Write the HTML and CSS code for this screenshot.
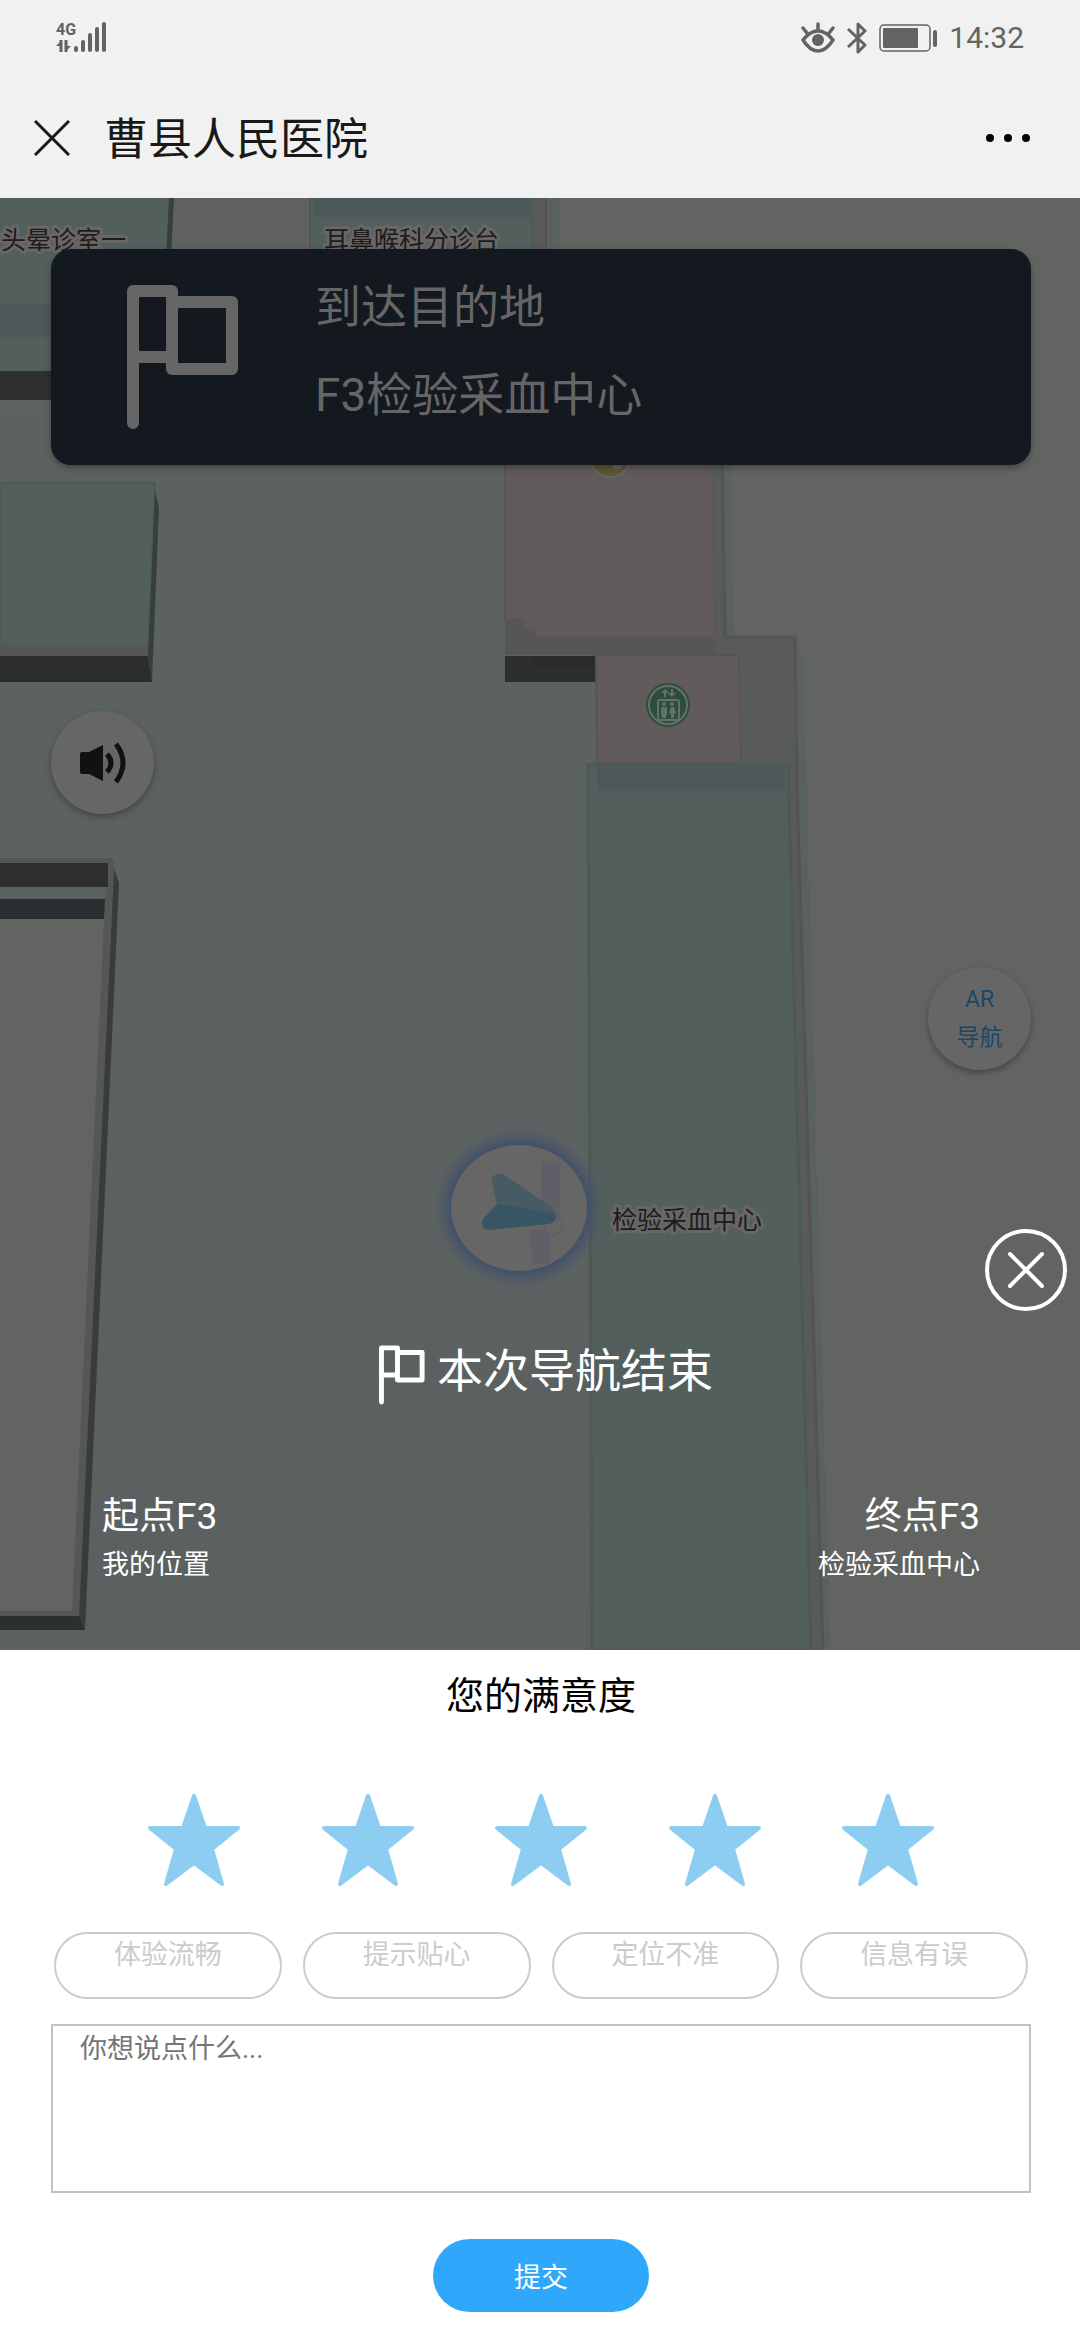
FILE: index.html
```html
<!DOCTYPE html>
<html lang="zh-CN">
<head>
  <meta charset="UTF-8"/>
  <meta name="viewport" content="width=device-width, initial-scale=1.0"/>
  <title>曹县人民医院</title>
  <link rel="stylesheet" href="styles.css">
</head>
<body>
  <header>
    <div class="status-bar">
      <svg class="signal" viewBox="0 0 52 36" width="52" height="36" aria-hidden="true">
        <text class="network" x="0" y="15">4G</text>
        <path d="M5 20v12M10 20v12" fill="none" stroke="#636363" stroke-width="3"/>
        <path d="M6 20v6H0zM9 32v-6h6z" fill="#636363"/>
        <path d="M20 28v2M27 22v8M34 15v15M41 9v21M48 4v26" fill="none" stroke="#636363" stroke-width="4" stroke-linecap="round"/>
      </svg>
      <div class="status-right">
        <svg viewBox="0 0 34 34" width="34" height="34" aria-hidden="true">
          <path d="M2 19Q9 10 17 10t15 9Q25 30 17 30T2 19zM17 9V3M6 12L2 7M28 12l4-5" fill="none" stroke="#636363" stroke-width="3.5" stroke-linecap="round" stroke-linejoin="round"/>
          <circle cx="17" cy="19" r="6" fill="#636363"/>
        </svg>
        <svg viewBox="0 0 20 34" width="20" height="34" aria-hidden="true">
          <path d="M1 8l17 16-7 7V3l7 7L1 26" fill="none" stroke="#636363" stroke-width="3" stroke-linejoin="round"/>
        </svg>
        <svg class="battery" viewBox="0 0 58 28" width="58" height="28" aria-hidden="true">
          <rect x="1" y="1" width="50" height="26" rx="4" fill="none" stroke="#636363" stroke-width="1.5"/>
          <rect x="4" y="4" width="35" height="20" rx="1" fill="#636363"/>
          <rect x="54" y="6" width="4" height="17" rx="2" fill="#636363"/>
        </svg>
        <span class="clock">14:32</span>
      </div>
    </div>
    <div class="title-bar">
      <button class="icon-btn" type="button" aria-label="关闭">
        <svg viewBox="0 0 36 36" width="36" height="36"><path d="M1 1l34 34M35 1L1 35" stroke="#191919" stroke-width="3"/></svg>
      </button>
      <h1>曹县人民医院</h1>
      <button class="icon-btn" type="button" aria-label="更多">
        <svg viewBox="0 0 44 8" width="44" height="8"><circle cx="4" cy="4" r="4"/><circle cx="22" cy="4" r="4"/><circle cx="40" cy="4" r="4"/></svg>
      </button>
    </div>
  </header>

  <main class="stage">
    <!-- Indoor floor map -->
    <svg class="map" viewBox="0 198 1080 1452" preserveAspectRatio="xMidYMin slice" aria-hidden="true">
      <defs>
        <linearGradient id="floor" x1="0" y1="0" x2="0" y2="1">
          <stop offset="0" stop-color="#606160"/>
          <stop offset="0.25" stop-color="#5b6261"/>
          <stop offset="1" stop-color="#5b6161"/>
        </linearGradient>
        <radialGradient id="glow">
          <stop offset="0.8" stop-color="#41506a"/>
          <stop offset="0.88" stop-color="#41506a" stop-opacity="0.5"/>
          <stop offset="1" stop-color="#41506a" stop-opacity="0"/>
        </radialGradient>
      </defs>
      <rect y="198" width="1080" height="1452" fill="url(#floor)"/>
      <!-- outside -->
      <path d="M559 198H1080V1650H830L803 660 795 637H734L731 465 559 440z" fill="#626462"/>
      <path d="M547 198h12v60h-12zM722 465h9l3 172h-9zM795 650l8 10 27 990h-7z" fill="#5a6261"/>

      <!-- upper left rooms -->
      <path d="M0 198h169l-6 173H0z" fill="#525f5c"/>
      <path d="M0 304h165v33H0z" fill="#4d5958"/>
      <path d="M169 198h5l-3 60h-5z" fill="#38403f"/>
      <path d="M0 371h163v29H0z" fill="#2d302f"/>
      <path d="M0 483h155l-7 163H0z" fill="#525f5c" stroke="#4d5a58" stroke-width="2"/>
      <path d="M0 646h149v10H0z" fill="#555756"/>
      <path d="M0 656h148l4 26H0z" fill="#2b2d2c"/>
      <path d="M155 490l4 18-7 174-4-26z" fill="#383e3d"/>

      <!-- lower left room -->
      <path d="M0 858h111l3 2-35 756H0z" fill="#555756"/>
      <path d="M114 868l5 15-34 747-6-14z" fill="#3a3c3b"/>
      <path d="M0 863h108v24H0z" fill="#2e302f"/>
      <path d="M0 887h107l-2 12H0z" fill="#5a6261"/>
      <path d="M0 899h105l-1 20H0z" fill="#2a2e30"/>
      <path d="M0 919h104L72 1611H0z" fill="#626462"/>
      <path d="M0 1616h79l6 14H0z" fill="#2d2f2e"/>

      <!-- top middle room -->
      <path d="M310 198h222v60H310z" fill="#525f5c" stroke="#4d5a58" stroke-width="2"/>
      <path d="M314 198h217v19H314z" fill="#4d5958"/>
      <path d="M533 198h14v60h-14z" fill="#585a59"/>
      <path d="M546 198v60" stroke="#555251" stroke-width="2"/>

      <!-- stair hall and lift -->
      <path d="M505 450h217l3 187h70l2 150 26 863h-14L788 764H596V655h-91z" fill="#595b5a"/>
      <path d="M722 450l3 187h70l2 150 26 863" fill="none" stroke="#535453" stroke-width="3"/>
      <path d="M505 450h207l3 187H534v-8h-10v-10h-19z" fill="#605b5a" stroke="#595656" stroke-width="2"/>
      <path d="M505 619h19v10h10v8h181v18H505z" fill="#555756"/>
      <path d="M505 656h91v26h-91z" fill="#2d2f2e"/>
      <path d="M534 656h62v10h-62z" fill="#2a2c2b"/>
      <path d="M596 655h143l2 109H597z" fill="#605b5a" stroke="#575454" stroke-width="2"/>
      <circle cx="610" cy="457" r="20" fill="#5e5534" stroke="#646763" stroke-width="2"/>
      <path d="M606 465h7v4h8v-8h-15z" fill="#666"/>
      <g transform="translate(668 705)">
        <circle r="21" fill="#2c4e3c" stroke="#2c4e3c" stroke-width="2"/>
        <circle r="19" fill="none" stroke="#65706a" stroke-width="2"/>
        <rect x="-10" y="-5" width="21" height="20" rx="2" fill="none" stroke="#65706a" stroke-width="2"/>
        <path d="M-3-8v-6M4-16v6" stroke="#65706a" stroke-width="2"/>
        <path d="M-7-12l4-4 4 4zM0-12l4 4 4-4z" fill="#65706a"/>
        <circle cx="-4" cy="-1" r="2" fill="#65706a"/>
        <circle cx="4" cy="-1" r="2" fill="#65706a"/>
        <path d="M-7 2h6v6l-1 5h-4l-1-5zM3 2h3l2 6-2 1v4H3V9L1 8z" fill="#65706a"/>
      </g>

      <!-- blood test centre -->
      <path d="M588 765h200l23 885H592z" fill="#525f5c" stroke="#4b5957" stroke-width="3"/>
      <path d="M597 767h188v24H597z" fill="#4d5958"/>

      <!-- current position -->
      <ellipse cx="519" cy="1208" rx="84" ry="79" fill="url(#glow)"/>
      <ellipse cx="519" cy="1208" rx="68" ry="63" fill="#666"/>
      <path d="M541 1161h19v64h-19zM530 1230h20v34h-18z" fill="#605f68"/>
      <circle cx="553" cy="1226" r="9" fill="#666" stroke="#605f68" stroke-width="2"/>
      <path d="M497 1204L492 1183Q491 1175 498 1174 502 1173 506 1176L551 1207Q558 1213 555 1219z" fill="#465b64"/>
      <path d="M497 1204L483 1219Q479 1230 490 1230L549 1224Q557 1222 556 1214z" fill="#385563"/>

      <g class="map-label">
        <text x="1" y="249">头晕诊室一</text>
        <text x="324" y="249">耳鼻喉科分诊台</text>
        <text x="612" y="1229">检验采血中心</text>
      </g>
    </svg>

    <section class="nav-card">
      <svg viewBox="0 0 112 144" width="112" height="144" aria-hidden="true">
        <path d="M6 138V6h39v78h60V17H45M6 72h39" fill="none" stroke="#666" stroke-width="12" stroke-linecap="round" stroke-linejoin="round"/>
      </svg>
      <div class="nav-text">
        <p>到达目的地</p>
        <p>F3检验采血中心</p>
      </div>
    </section>

    <button class="round-btn voice-btn" type="button" aria-label="语音播报">
      <svg viewBox="0 0 46 42" width="46" height="42">
        <path d="M2 10h7L23 3v36L9 32H2q-2 0-2-2V12q0-2 2-2z" fill="#111"/>
        <path d="M27 12q8 9 0 18M36 2q14 19 0 38" fill="none" stroke="#111" stroke-width="5"/>
      </svg>
    </button>

    <button class="round-btn ar-btn" type="button"><span>AR</span><span>导航</span></button>

    <button class="close-btn" type="button" aria-label="关闭评价">
      <svg viewBox="0 0 82 82" width="82" height="82">
        <circle cx="41" cy="41" r="39" fill="none" stroke="#fff" stroke-width="4"/>
        <path d="M25 25l32 32M57 25L25 57" stroke="#fff" stroke-width="4" stroke-linecap="round"/>
      </svg>
    </button>

    <div class="finish">
      <svg viewBox="0 0 112 144" width="46" height="60" aria-hidden="true">
        <path d="M6 138V6h39v78h60V17H45M6 72h39" fill="none" stroke="#fff" stroke-width="12" stroke-linecap="round" stroke-linejoin="round"/>
      </svg>
      <h2>本次导航结束</h2>
    </div>

    <div class="route">
      <div>
        <p class="floor">起点F3</p>
        <p class="place">我的位置</p>
      </div>
      <div class="route-end">
        <p class="floor">终点F3</p>
        <p class="place">检验采血中心</p>
      </div>
    </div>
  </main>

  <!-- Rating form -->
  <form class="feedback">
    <svg class="symbols" aria-hidden="true">
      <symbol id="star" viewBox="0 0 94 94">
        <path d="M47 3L58 35H91L65 56 75 91 47 70 19 91 29 56 3 35H36z" fill="#8dcdf1" stroke="#8dcdf1" stroke-width="4" stroke-linejoin="round"/>
      </symbol>
    </svg>
    <h2>您的满意度</h2>
    <div class="stars">
      <button type="button" aria-label="1星"><svg><use href="#star"/></svg></button>
      <button type="button" aria-label="2星"><svg><use href="#star"/></svg></button>
      <button type="button" aria-label="3星"><svg><use href="#star"/></svg></button>
      <button type="button" aria-label="4星"><svg><use href="#star"/></svg></button>
      <button type="button" aria-label="5星"><svg><use href="#star"/></svg></button>
    </div>
    <div class="tags">
      <button type="button">体验流畅</button>
      <button type="button">提示贴心</button>
      <button type="button">定位不准</button>
      <button type="button">信息有误</button>
    </div>
    <textarea aria-label="评价内容" placeholder="你想说点什么..."></textarea>
    <button class="submit" type="submit">提交</button>
  </form>
</body>
</html>
```
FILE: styles.css
```css
:root {
  --bar: #f1f1f1;
  --status: #636363;
  --dimmed: #666666;
  --card: #14181f;
  --primary: #2fa7fb;
  --outline: #cccccc;
  --side-left: 51px;
  --side-right: 49px;
  --text-sm: 27px;
  --text-md: 37px;
  --text-lg: 46px;
}

*, *::before, *::after {
  margin: 0;
  padding: 0;
  box-sizing: border-box;
}

body {
  font-family: Roboto, "Noto Sans CJK SC", sans-serif;
  background: #fff;
  color: #000;
  display: flex;
  flex-direction: column;
  min-height: 100vh;
}

h1, h2 {
  font-weight: 400;
}

svg {
  display: block;
}

button {
  font: inherit;
  background: none;
  border: none;
  cursor: pointer;
}

/* Header */
header {
  background: var(--bar);
}
.status-bar {
  display: flex;
  justify-content: space-between;
  align-items: center;
  height: 76px;
  padding: 0 56px;
}
.signal {
  overflow: visible;
}
.network {
  font-size: 16px;
  font-weight: 700;
  fill: var(--status);
}
.status-right {
  display: flex;
  align-items: center;
  gap: 12px;
}
.clock {
  font-size: 30px;
  line-height: 40px;
  color: var(--status);
}
.title-bar {
  display: flex;
  align-items: center;
  gap: 34px;
  height: 122px;
  padding: 2px 50px 0 34px;
}
.title-bar h1 {
  flex: 1;
  padding-top: 4px;
  font-size: 44px;
  line-height: 60px;
  color: #191919;
}

/* Map stage */
.stage {
  position: relative;
  display: flex;
  flex-direction: column;
  flex: 1 0 auto;
  padding-top: 51px;
  overflow: hidden;
}
.map {
  position: absolute;
  inset: 0;
  width: 100%;
  height: 100%;
}
.map-label {
  font-size: 25px;
  fill: #1c1c1c;
  stroke: #686666;
  stroke-width: 6px;
  stroke-linejoin: round;
  paint-order: stroke;
}
.stage > :not(.map) {
  position: relative;
}

.nav-card {
  display: flex;
  align-items: center;
  gap: 76px;
  height: 216px;
  margin: 0 var(--side-right) 0 var(--side-left);
  padding: 0 76px;
  border-radius: 20px;
  background: var(--card);
  box-shadow: 0 3px 6px rgba(0, 0, 0, 0.3);
  color: var(--dimmed);
  font-size: var(--text-lg);
  line-height: 88px;
}
.nav-text {
  padding-bottom: 12px;
}

.round-btn {
  display: flex;
  flex-direction: column;
  align-items: center;
  justify-content: center;
  width: 103px;
  height: 103px;
  margin: 0 var(--side-right) 0 var(--side-left);
  border-radius: 50%;
  background: var(--dimmed);
  box-shadow: 0 3px 6px rgba(0, 0, 0, 0.3);
}
.voice-btn {
  margin-top: 246px;
}
.ar-btn {
  align-self: flex-end;
  margin-top: 153px;
  font-size: 23px;
  line-height: 38px;
  color: #1b4766;
}
.close-btn {
  align-self: flex-end;
  margin: 159px 13px 0 0;
}

.finish {
  display: flex;
  justify-content: center;
  gap: 12px;
  margin-top: 34px;
  padding-left: 12px;
  color: #fff;
}
.finish h2 {
  font-size: var(--text-lg);
  line-height: 52px;
}

.route {
  display: flex;
  justify-content: space-between;
  margin-top: 88px;
  padding: 0 100px 61px 102px;
  color: #fff;
  line-height: 48px;
}
.route-end {
  text-align: right;
}
.floor {
  font-size: var(--text-md);
}
.place {
  font-size: var(--text-sm);
}

/* Feedback */
.feedback {
  display: flex;
  flex-direction: column;
  padding: 19px var(--side-right) 28px var(--side-left);
  background: #fff;
}
.symbols {
  position: absolute;
  width: 0;
  height: 0;
}
.feedback h2 {
  font-size: 38px;
  line-height: 54px;
  text-align: center;
}
.stars {
  display: flex;
  justify-content: space-between;
  margin: 70px 96px 0;
}
.stars svg {
  width: 94px;
  height: 94px;
}
.tags {
  display: grid;
  grid-template-columns: repeat(4, 1fr);
  gap: 21px;
  margin: 45px 3px 0;
}
.tags button {
  height: 67px;
  padding-bottom: 20px;
  border: 2px solid var(--outline);
  border-radius: 34px;
  font-size: var(--text-sm);
  line-height: 43px;
  color: var(--outline);
}
.feedback textarea {
  height: 169px;
  margin-top: 25px;
  padding: 3px 27px;
  border: 2px solid #c2c2c2;
  border-radius: 0;
  font: inherit;
  font-size: var(--text-sm);
  line-height: 40px;
  resize: none;
}
.feedback textarea::placeholder {
  color: #757575;
}
.submit {
  align-self: center;
  width: 216px;
  height: 73px;
  margin-top: 46px;
  border-radius: 37px;
  background: var(--primary);
  color: #fff;
  font-size: var(--text-sm);
}
```
